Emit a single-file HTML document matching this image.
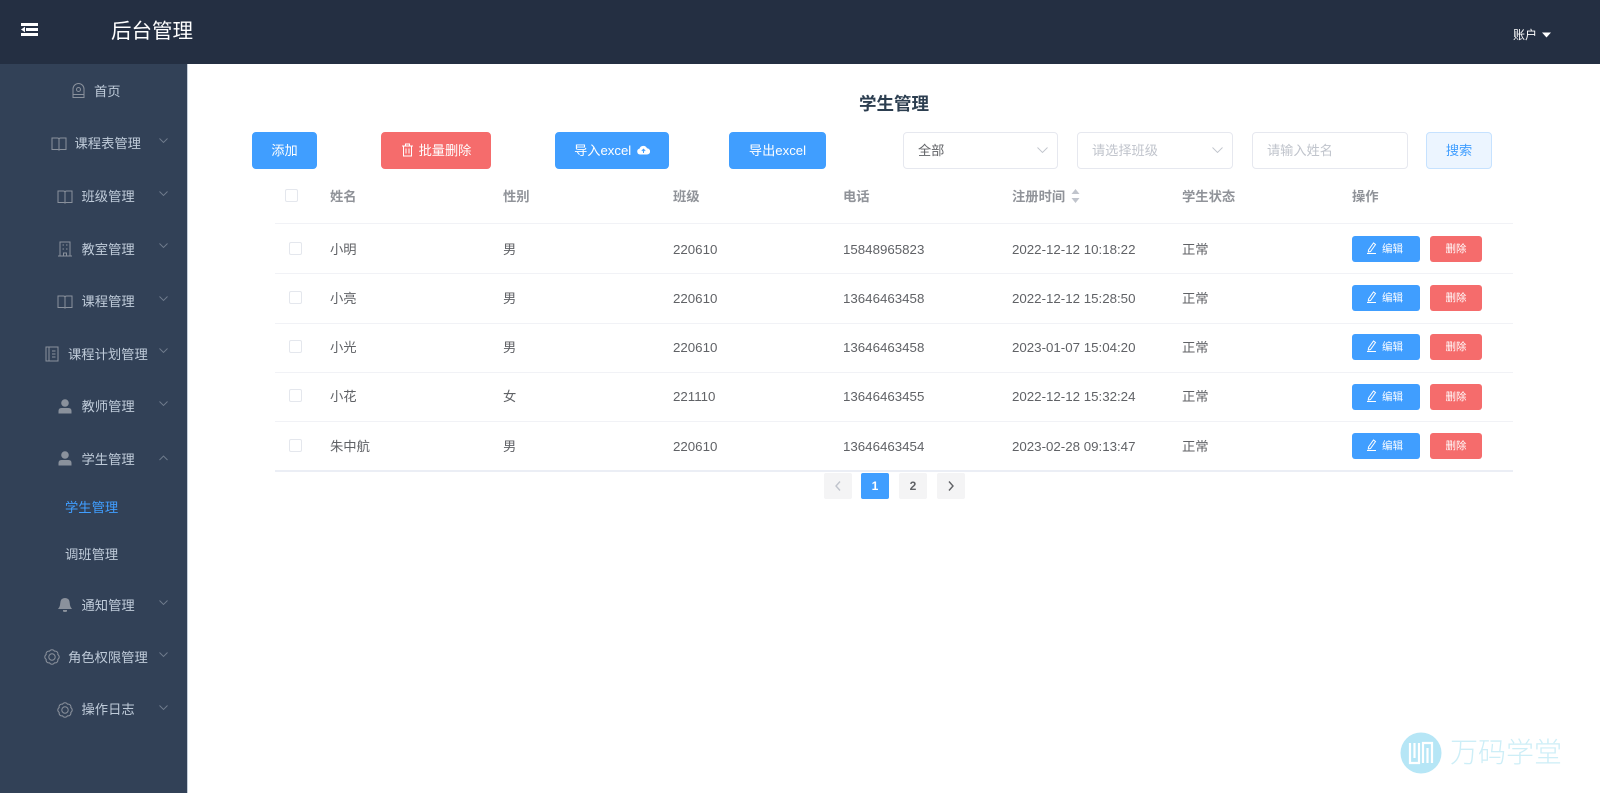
<!DOCTYPE html>
<html lang="zh"><head><meta charset="utf-8"><title>学生管理</title>
<style>
*{box-sizing:border-box}
html,body{margin:0;padding:0;width:1600px;height:793px;overflow:hidden;background:#fff;font-family:"Liberation Sans","Noto Sans CJK SC",sans-serif;font-size:14px;color:#606266}
.a{position:absolute;white-space:nowrap}
.t{position:absolute;white-space:nowrap;line-height:20px;height:20px}
#hd{left:0;top:0;width:1600px;height:64px;background:#242f42}
#sd{left:0;top:64px;width:188px;height:729px;background:#324157;border-right:1px solid #c4cdd8}
.m{color:#bfcbd9;font-size:13.3px}
.sub{color:#bfcbd9;font-size:13.3px;margin-top:1px}
.ic{position:absolute;fill:none;stroke:#8a919c;stroke-width:1}
.ch{position:absolute;left:159px;width:9px;height:6px;fill:none;stroke:#717d8e;stroke-width:.9}
.btn{position:absolute;top:132px;height:37px;line-height:35px;border-radius:4px;color:#fff;font-size:13.2px;text-align:center;white-space:nowrap;background:#409eff;border:1px solid #409eff}
.red{background:#f56c6c;border-color:#f56c6c}
.inp{position:absolute;top:132px;height:37px;line-height:35px;border:1px solid #e6e8ef;border-radius:4px;background:#fff;padding-left:14px;font-size:13.2px;color:#606266;white-space:nowrap}
.ph{color:#c0c4cc}
.dn{position:absolute;top:14px;right:9px;width:11px;height:7px;fill:none;stroke:#c0c4cc;stroke-width:.9}
.line{position:absolute;left:275px;width:1238px;height:1px;background:#f1f2f6}
.cb{position:absolute;width:13px;height:13px;border:1px solid #e4e7ed;border-radius:2px;background:#fff}
.th{position:absolute;white-space:nowrap;line-height:20px;height:20px;color:#909399;font-weight:bold;font-size:13.3px;margin-top:1px}
.td{position:absolute;white-space:nowrap;line-height:20px;height:20px;color:#606266;font-size:13.3px;margin-top:1px}
.eb,.db{position:absolute;height:26px;line-height:26px;border-radius:3px;color:#fff;font-size:10.5px;text-align:center;white-space:nowrap}
.eb{left:1352px;width:68px;background:#409eff}
.db{left:1430px;width:52px;background:#f56c6c}
.eb svg{vertical-align:-2px;margin-right:5px;margin-left:-3px}
.pg{position:absolute;top:473px;width:28px;height:26px;line-height:27px;background:#f4f4f5;border-radius:2px;text-align:center;font-size:12px;font-weight:bold;color:#606266}
.pg svg{display:block;margin:8px auto 0}
</style></head><body>
<div class="a" id="hd"></div>
<svg class="a" style="left:20px;top:22px" width="20" height="16" viewBox="0 0 20 16"><rect x="1" y="1" width="17" height="3" fill="#fff"/><rect x="6" y="6" width="12" height="3" fill="#fff"/><rect x="1" y="11" width="17" height="3" fill="#fff"/><path d="M5 4.800 1 7.500 5 10.200z" fill="#fff"/></svg>
<div class="t" style="left:111px;top:19px;height:26px;line-height:26px;font-size:20.5px;color:#fff">后台管理</div>
<div class="t" style="left:1513px;top:25px;font-size:12px;color:#fff">账户</div>
<svg class="a" style="left:1542px;top:32px" width="9" height="6"><path d="M0 .5h9L4.500 5.500z" fill="#fff"/></svg>

<div class="a" id="sd"></div>
<svg class="ic" style="left:71px;top:82px" width="15" height="18" viewBox="0 0 15 18"><path d="M2 15.500V7a5.500 5.500 0 0 1 11 0v8.500zM2 12.500h11"/><circle cx="7.500" cy="7.500" r="2"/></svg>
<div class="t m" style="left:94px;top:82px">首页</div>

<svg class="ic" style="left:51px;top:136px" width="16" height="16" viewBox="0 0 16 16"><path d="M1 2h5.500q1.500 0 1.500 1.500Q8 2 9.500 2H15v11.500H9.500q-1.500 0-1.500 1q0-1-1.500-1H1zM8 3.500v11"/></svg>
<div class="t m" style="left:74.500px;top:134px">课程表管理</div>
<svg class="ch" style="top:138px" viewBox="0 0 9 6"><path d="M.5.5 4.500 4.500 8.500.5"/></svg>

<svg class="ic" style="left:57px;top:189px" width="16" height="16" viewBox="0 0 16 16"><path d="M1 2h5.500q1.500 0 1.500 1.500Q8 2 9.500 2H15v11.500H9.500q-1.500 0-1.500 1q0-1-1.500-1H1zM8 3.500v11"/></svg>
<div class="t m" style="left:81.500px;top:187px">班级管理</div>
<svg class="ch" style="top:191px" viewBox="0 0 9 6"><path d="M.5.5 4.500 4.500 8.500.5"/></svg>

<svg class="ic" style="left:58px;top:241px" width="14" height="16" viewBox="0 0 14 16"><path d="M2 15V1h10v14M0 15h14M5.500 15v-3h3v3M4.500 4h1.500M8 4h1.500M4.500 8h1.500M8 8h1.500"/></svg>
<div class="t m" style="left:81.500px;top:240px">教室管理</div>
<svg class="ch" style="top:243px" viewBox="0 0 9 6"><path d="M.5.5 4.500 4.500 8.500.5"/></svg>

<svg class="ic" style="left:57px;top:294px" width="16" height="16" viewBox="0 0 16 16"><path d="M1 2h5.500q1.500 0 1.500 1.500Q8 2 9.500 2H15v11.500H9.500q-1.500 0-1.500 1q0-1-1.500-1H1zM8 3.500v11"/></svg>
<div class="t m" style="left:81.500px;top:292px">课程管理</div>
<svg class="ch" style="top:296px" viewBox="0 0 9 6"><path d="M.5.5 4.500 4.500 8.500.5"/></svg>

<svg class="ic" style="left:45px;top:346px" width="14" height="16" viewBox="0 0 14 16"><path d="M1 1h12v14H1zM4 1v14M7 5h3.500M7 8h3.500M7 11h3.500"/></svg>
<div class="t m" style="left:68px;top:345px">课程计划管理</div>
<svg class="ch" style="top:348px" viewBox="0 0 9 6"><path d="M.5.5 4.500 4.500 8.500.5"/></svg>

<svg class="a" style="left:58px;top:399px" width="14" height="15" viewBox="0 0 14 15"><circle cx="7" cy="4" r="3.800" fill="#8a919c"/><path d="M0.500 14.500v-2.500q0-3 3-3h7q3 0 3 3v2.500z" fill="#8a919c"/></svg>
<div class="t m" style="left:81.500px;top:397px">教师管理</div>
<svg class="ch" style="top:401px" viewBox="0 0 9 6"><path d="M.5.5 4.500 4.500 8.500.5"/></svg>

<svg class="a" style="left:58px;top:451px" width="14" height="15" viewBox="0 0 14 15"><circle cx="7" cy="4" r="3.800" fill="#8a919c"/><path d="M0.500 14.500v-2.500q0-3 3-3h7q3 0 3 3v2.500z" fill="#8a919c"/></svg>
<div class="t m" style="left:81.500px;top:450px">学生管理</div>
<svg class="ch" style="top:455px" viewBox="0 0 9 6"><path d="M.5 5 4.500 1 8.500 5"/></svg>

<div class="t sub" style="left:65px;top:497px;color:#409eff">学生管理</div>
<div class="t sub" style="left:65px;top:544px">调班管理</div>

<svg class="a" style="left:58px;top:597px" width="14" height="16" viewBox="0 0 14 16"><path d="M7 1q4.600 0 4.800 5.500q.1 3 2.200 5.500H0q2.100-2.500 2.200-5.500Q2.400 1 7 1z" fill="#8a919c"/><path d="M5 13h4v1.500q-2 1-4 0z" fill="#8a919c"/></svg>
<div class="t m" style="left:81.500px;top:596px">通知管理</div>
<svg class="ch" style="top:600px" viewBox="0 0 9 6"><path d="M.5.5 4.500 4.500 8.500.5"/></svg>

<svg class="ic" style="left:44px;top:649px" width="16" height="16" viewBox="0 0 16 16"><path d="M13.820 10.410A2.800 2.800 0 0 1 10.410 13.820A2.800 2.800 0 0 1 5.590 13.820A2.800 2.800 0 0 1 2.180 10.410A2.800 2.800 0 0 1 2.180 5.590A2.800 2.800 0 0 1 5.590 2.180A2.800 2.800 0 0 1 10.410 2.180A2.800 2.800 0 0 1 13.820 5.590A2.800 2.800 0 0 1 13.820 10.410z"/><circle cx="8" cy="8" r="3.200"/></svg>
<div class="t m" style="left:68px;top:648px">角色权限管理</div>
<svg class="ch" style="top:652px" viewBox="0 0 9 6"><path d="M.5.5 4.500 4.500 8.500.5"/></svg>

<svg class="ic" style="left:57px;top:702px" width="16" height="16" viewBox="0 0 16 16"><path d="M13.820 10.410A2.800 2.800 0 0 1 10.410 13.820A2.800 2.800 0 0 1 5.590 13.820A2.800 2.800 0 0 1 2.180 10.410A2.800 2.800 0 0 1 2.180 5.590A2.800 2.800 0 0 1 5.590 2.180A2.800 2.800 0 0 1 10.410 2.180A2.800 2.800 0 0 1 13.820 5.590A2.800 2.800 0 0 1 13.820 10.410z"/><circle cx="8" cy="8" r="3.200"/></svg>
<div class="t m" style="left:81.500px;top:700px">操作日志</div>
<svg class="ch" style="top:705px" viewBox="0 0 9 6"><path d="M.5.5 4.500 4.500 8.500.5"/></svg>

<div class="t" style="left:859px;top:92px;height:24px;line-height:24px;font-size:17.500px;font-weight:bold;color:#2c3e50">学生管理</div>

<div class="btn" style="left:252px;width:65px">添加</div>
<div class="btn red" style="left:381px;width:110px"><svg width="13" height="14" viewBox="0 0 13 14" fill="none" stroke="#fff" style="vertical-align:-2px;margin-right:5px"><path d="M1 3h11M4.500 3V1h4v2M2.500 3v10h8V3M5 5.500v5M8 5.500v5"/></svg>批量删除</div>
<div class="btn" style="left:555px;width:114px">导入excel <svg width="13" height="10" viewBox="0 0 13 10" style="margin-left:2px;vertical-align:0"><path d="M3 9.500a3 3 0 0 1-.5-5.900A4 4 0 0 1 10 3.300a3.100 3.100 0 0 1 0 6.200z" fill="#fff"/><path d="M6.500 8V4.500M4.800 6l1.700-1.800L8.200 6" fill="none" stroke="#409eff"/></svg></div>
<div class="btn" style="left:729px;width:97px">导出excel</div>

<div class="inp" style="left:903px;width:155px">全部<svg class="dn" viewBox="0 0 11 7"><path d="M.5.5 5.500 5.500 10.500.5"/></svg></div>
<div class="inp ph" style="left:1077px;width:156px">请选择班级<svg class="dn" viewBox="0 0 11 7"><path d="M.5.5 5.500 5.500 10.500.5"/></svg></div>
<div class="inp ph" style="left:1252px;width:156px">请输入姓名</div>
<div class="btn" style="left:1426px;width:66px;background:#ecf5ff;border-color:#c6e2ff;color:#409eff">搜索</div>

<div class="cb" style="left:285px;top:189px"></div>
<div class="th" style="left:330px;top:186px">姓名</div>
<div class="th" style="left:503px;top:186px">性别</div>
<div class="th" style="left:673px;top:186px">班级</div>
<div class="th" style="left:843px;top:186px">电话</div>
<div class="th" style="left:1012px;top:186px">注册时间</div>
<svg class="a" style="left:1071px;top:189px" width="9" height="14"><path d="M4.500 0 8.500 5H.5zM4.500 14 .5 9h8z" fill="#c0c4cc"/></svg>
<div class="th" style="left:1182px;top:186px">学生状态</div>
<div class="th" style="left:1352px;top:186px">操作</div>
<div class="line" style="top:223px"></div>

<div class="cb" style="left:289px;top:242px"></div>
<div class="td" style="left:330px;top:239px">小明</div><div class="td" style="left:503px;top:239px">男</div><div class="td" style="left:673px;top:239px">220610</div><div class="td" style="left:843px;top:239px">15848965823</div><div class="td" style="left:1012px;top:239px">2022-12-12 10:18:22</div><div class="td" style="left:1182px;top:239px">正常</div>
<div class="eb" style="top:236px"><svg width="11" height="12" viewBox="0 0 11 12" fill="none" stroke="#fff"><path d="M2.500 8 7.500 1l2 1.500-5 7-2.200.5zM1 11.500h9"/></svg>编辑</div><div class="db" style="top:236px">删除</div>
<div class="line" style="top:273px"></div>

<div class="cb" style="left:289px;top:291px"></div>
<div class="td" style="left:330px;top:288px">小亮</div><div class="td" style="left:503px;top:288px">男</div><div class="td" style="left:673px;top:288px">220610</div><div class="td" style="left:843px;top:288px">13646463458</div><div class="td" style="left:1012px;top:288px">2022-12-12 15:28:50</div><div class="td" style="left:1182px;top:288px">正常</div>
<div class="eb" style="top:285px"><svg width="11" height="12" viewBox="0 0 11 12" fill="none" stroke="#fff"><path d="M2.500 8 7.500 1l2 1.500-5 7-2.200.5zM1 11.500h9"/></svg>编辑</div><div class="db" style="top:285px">删除</div>
<div class="line" style="top:323px"></div>

<div class="cb" style="left:289px;top:340px"></div>
<div class="td" style="left:330px;top:337px">小光</div><div class="td" style="left:503px;top:337px">男</div><div class="td" style="left:673px;top:337px">220610</div><div class="td" style="left:843px;top:337px">13646463458</div><div class="td" style="left:1012px;top:337px">2023-01-07 15:04:20</div><div class="td" style="left:1182px;top:337px">正常</div>
<div class="eb" style="top:334px"><svg width="11" height="12" viewBox="0 0 11 12" fill="none" stroke="#fff"><path d="M2.500 8 7.500 1l2 1.500-5 7-2.200.5zM1 11.500h9"/></svg>编辑</div><div class="db" style="top:334px">删除</div>
<div class="line" style="top:372px"></div>

<div class="cb" style="left:289px;top:389px"></div>
<div class="td" style="left:330px;top:386px">小花</div><div class="td" style="left:503px;top:386px">女</div><div class="td" style="left:673px;top:386px">221110</div><div class="td" style="left:843px;top:386px">13646463455</div><div class="td" style="left:1012px;top:386px">2022-12-12 15:32:24</div><div class="td" style="left:1182px;top:386px">正常</div>
<div class="eb" style="top:384px"><svg width="11" height="12" viewBox="0 0 11 12" fill="none" stroke="#fff"><path d="M2.500 8 7.500 1l2 1.500-5 7-2.200.5zM1 11.500h9"/></svg>编辑</div><div class="db" style="top:384px">删除</div>
<div class="line" style="top:421px"></div>

<div class="cb" style="left:289px;top:439px"></div>
<div class="td" style="left:330px;top:436px">朱中航</div><div class="td" style="left:503px;top:436px">男</div><div class="td" style="left:673px;top:436px">220610</div><div class="td" style="left:843px;top:436px">13646463454</div><div class="td" style="left:1012px;top:436px">2023-02-28 09:13:47</div><div class="td" style="left:1182px;top:436px">正常</div>
<div class="eb" style="top:433px"><svg width="11" height="12" viewBox="0 0 11 12" fill="none" stroke="#fff"><path d="M2.500 8 7.500 1l2 1.500-5 7-2.200.5zM1 11.500h9"/></svg>编辑</div><div class="db" style="top:433px">删除</div>
<div class="line" style="top:470px;height:2px;background:#ebeef5"></div>

<div class="pg" style="left:824px"><svg width="8" height="10" viewBox="0 0 8 10" fill="none" stroke="#c0c4cc" stroke-width="1.400"><path d="M6 .5 2 5l4 4.500"/></svg></div>
<div class="pg" style="left:861px;background:#409eff;color:#fff">1</div>
<div class="pg" style="left:899px">2</div>
<div class="pg" style="left:937px"><svg width="8" height="10" viewBox="0 0 8 10" fill="none" stroke="#606266" stroke-width="1.400"><path d="M2 .5 6 5 2 9.500"/></svg></div>

<svg class="a" style="left:1400px;top:732px" width="42" height="42" viewBox="0 0 42 42"><circle cx="21" cy="21" r="20.500" fill="#b6e6f6"/><path d="M10 11v20h9V11M14.500 11v15M23 31V11h9v20M27.500 31V16" fill="none" stroke="#fff" stroke-width="2.200"/></svg>
<div class="t" style="left:1450px;top:733px;height:40px;line-height:40px;font-size:28px;font-weight:300;color:#cdeef7">万码学堂</div>
</body></html>
